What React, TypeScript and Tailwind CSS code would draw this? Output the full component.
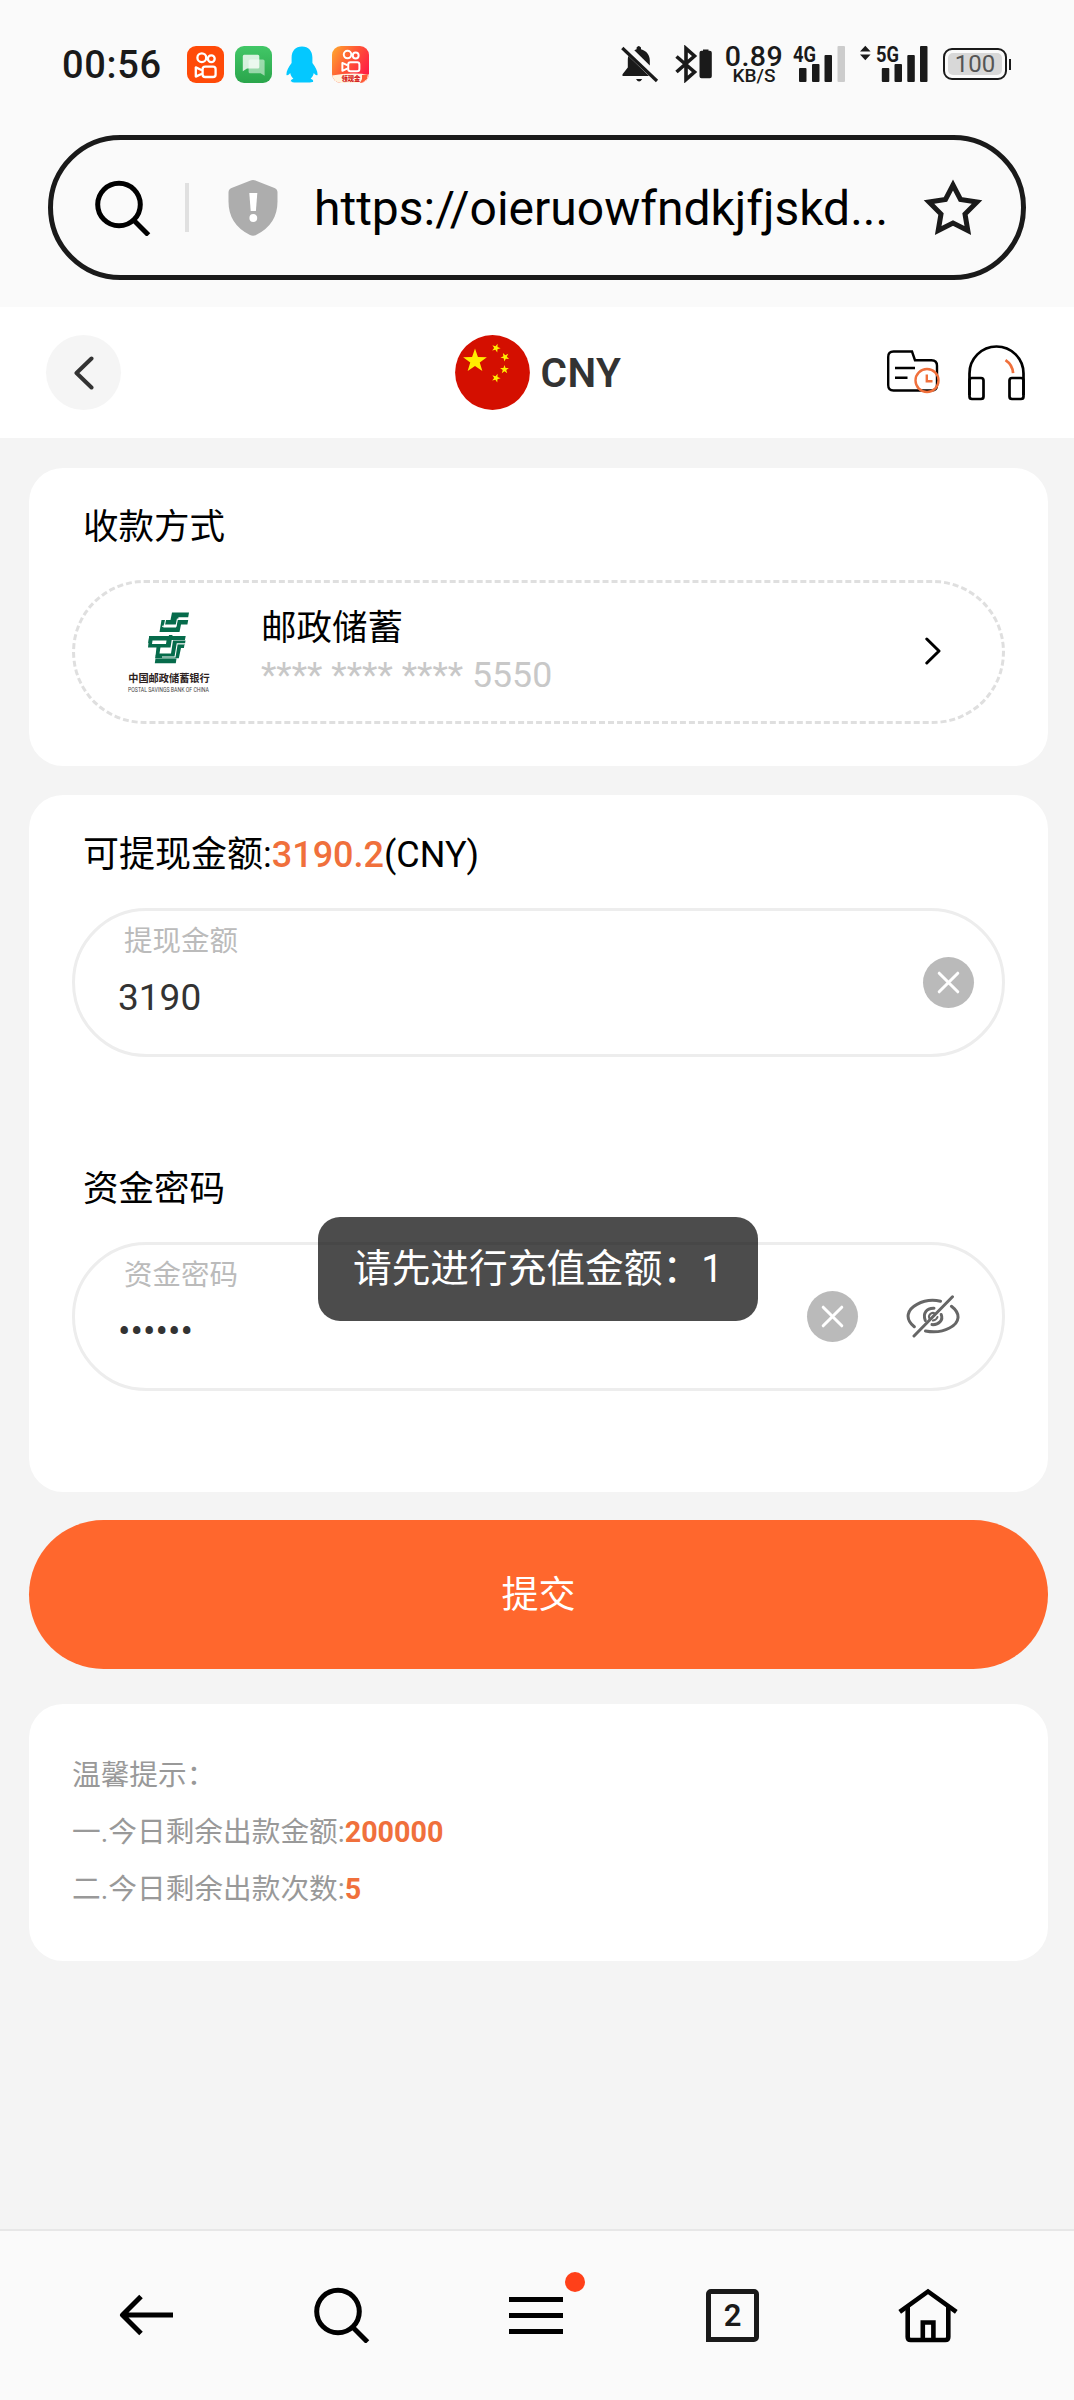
import React from 'react';

interface FieldProps {
  label: string;
  value: string;
  children: React.ReactNode;
}

const KwaiGlyph: React.FC = () => (
  <g fill="none" stroke="#fff" strokeWidth="2.3" strokeLinejoin="round">
    <circle cx="14.8" cy="11.7" r="4.4" />
    <circle cx="24.3" cy="12.8" r="3.4" />
    <rect x="15.6" y="20.6" width="13" height="10.4" rx="2.6" />
    <path d="M15 24.2 8.8 21.4v9.2l6.2-2.8" />
  </g>
);

const AppIcons: React.FC = () => (
  <>
    <svg className="ml-[24px] h-[37px] w-[37px]" viewBox="0 0 37 37">
      <rect width="37" height="37" rx="9" fill="#ff4a08" />
      <KwaiGlyph />
    </svg>
    <svg className="ml-[11px] h-[37px] w-[37px]" viewBox="0 0 37 37">
      <defs>
        <linearGradient id="chat" x1="0" y1="0" x2="0" y2="1">
          <stop offset="0" stopColor="#42c767" />
          <stop offset="1" stopColor="#2aa54b" />
        </linearGradient>
      </defs>
      <rect width="37" height="37" rx="9" fill="url(#chat)" />
      <path d="M15 13.5h13q1.6 0 1.6 1.6v14.6l-4-2.4H15q-1.4 0-1.4-1.5V15q0-1.5 1.4-1.5z" fill="#fff" opacity=".5" />
      <path d="M9.2 8.7h13.6q1.5 0 1.5 1.5v11q0 1.4-1.5 1.4H12l-4.2 2.6V10.2q0-1.5 1.4-1.5z" fill="#fff" opacity=".8" />
    </svg>
    <svg className="ml-[14px] h-[37px] w-[32px]" viewBox="0 0 32 37">
      <path
        d="M16 .4C9.500.4 5.600 5 5.600 11.500v5.500C2.500 21 .4 25 .4 28.500c.3 1.500 2 1 3.800-1.400.5 2.400 1.600 4.200 3.200 5.700-1.800.6-2.600 1.400-2.600 2.400 0 1 1.500 1.300 11.200 1.300s11.200-.3 11.200-1.300c0-1-.8-1.800-2.600-2.400 1.600-1.500 2.700-3.300 3.200-5.700 1.800 2.400 3.500 2.900 3.800 1.400 0-3.500-2.100-7.500-5.200-11.500v-5.500C26.400 5 22.500.4 16 .4z"
        fill="#04c8ff"
      />
    </svg>
    <svg className="ml-[14px] h-[37px] w-[37px]" viewBox="0 0 37 37">
      <defs>
        <linearGradient id="lite" x1="0" y1="0" x2="1" y2=".6">
          <stop offset="0" stopColor="#ffab2e" />
          <stop offset=".5" stopColor="#ff5a35" />
          <stop offset="1" stopColor="#ff1f45" />
        </linearGradient>
        <clipPath id="liteClip">
          <rect width="37" height="37" rx="9" />
        </clipPath>
      </defs>
      <g clipPath="url(#liteClip)">
        <rect width="37" height="37" fill="url(#lite)" />
        <path d="M0 29.500q18-3.500 37-1V37H0z" fill="#fff3e0" />
        <path d="M30 29l6-1-1 5-5 4h-2l2-4z" fill="#ff5a35" />
        <g transform="translate(2.8 -1.500) scale(.86)">
          <KwaiGlyph />
        </g>
      </g>
      <text x="9.500" y="34.800" fontSize="6.300" fontWeight="900" fill="#d51a1a">
        领现金
      </text>
    </svg>
  </>
);

const StatusBar: React.FC = () => (
  <div className="flex h-[128px] items-center pl-[62px] text-[#1a1a1a]">
    <span className="mt-[2px] w-[101px] text-[38px] leading-none font-medium tracking-[0.7px] whitespace-nowrap">00:56</span>
    <AppIcons />
    <svg className="ml-[252px] h-[38px] w-[38px]" viewBox="0 0 38 38" fill="#1a1a1a">
      <path d="M15.600 2.600q2-3.200 4.400 0v1.600c5.600 1.600 8.800 6 8.800 11.200v5.200L13.300 5.300q1-.7 2.300-1.100z" />
      <path d="M7.300 11 28 31H1.500v-1.700l5.300-6.800v-8q0-1.900.5-3.500z" />
      <path d="M15 34h6.200q-3.100 5-6.200 0z" />
      <path d="M1.300 3 36 36" stroke="#1a1a1a" strokeWidth="3.200" />
    </svg>
    <svg className="ml-[16px] h-[38px] w-[37px]" viewBox="0 0 37 38">
      <path d="M1.500 11.500 19.500 27 11 34.500v-31L19.500 11 1.500 27" fill="none" stroke="#1a1a1a" strokeWidth="3.600" />
      <path d="M28 4.500h5.500v1.200h1.300q2 0 2 2v23.500q0 2-2 2h-8.300q-2 0-2-2V7.700q0-2 2-2H28z" fill="#1a1a1a" />
    </svg>
    <div className="ml-[13px] flex w-[58px] flex-col items-center">
      <span className="text-[28.500px] leading-[23px] font-medium tracking-[0.5px]">0.89</span>
      <span className="text-[19px] leading-[16px] font-medium">KB/S</span>
    </div>
    <svg className="ml-[10px] h-[38px] w-[53px] overflow-visible" viewBox="0 0 53 38" fill="#1a1a1a">
      <text x="0" y="16.500" fontSize="22" fontWeight="700" textLength="23" lengthAdjust="spacingAndGlyphs">
        4G
      </text>
      <rect x="6" y="23" width="7.500" height="14" rx="1" />
      <rect x="19" y="19" width="7.500" height="18" rx="1" />
      <rect x="31.500" y="10" width="7.500" height="27" rx="1" />
      <rect x="44.500" y="1" width="7.500" height="36" rx="1" fill="#ccc" />
    </svg>
    <svg className="ml-[14px] h-[38px] w-[69px] overflow-visible" viewBox="0 0 69 38" fill="#1a1a1a">
      <path d="M0 6.500 5.300.8l5.300 5.700zM0 9.500h10.600L5.300 15.200z" />
      <text x="16" y="16.500" fontSize="22" fontWeight="700" textLength="23" lengthAdjust="spacingAndGlyphs">
        5G
      </text>
      <rect x="21.800" y="23" width="7.500" height="14" rx="1" />
      <rect x="34.500" y="19" width="7.500" height="18" rx="1" />
      <rect x="47.300" y="10" width="7.500" height="27" rx="1" />
      <rect x="60" y="1" width="7.500" height="36" rx="1" />
    </svg>
    <div className="ml-[14px] flex h-[32px] w-[64px] items-center justify-center rounded-[9px] border-2 border-[#1a1a1a] p-[3px]">
      <span className="h-full w-full rounded-[5px] bg-[#d8d8d8] text-center text-[24px] leading-[23px] text-[#555]">
        100
      </span>
    </div>
    <span className="ml-[2px] h-[11px] w-[2px] bg-[#1a1a1a]" />
  </div>
);

const SearchIcon: React.FC = () => (
  <svg className="h-[56px] w-[56px] shrink-0" viewBox="0 0 56 56" fill="none" stroke="#000" strokeWidth="5">
    <circle cx="24" cy="24.500" r="21.300" />
    <path d="M38.500 40 53.500 55" />
  </svg>
);

const AddressBar: React.FC = () => (
  <div className="mx-[48px] mt-[7px] flex h-[145px] items-center rounded-full border-[5px] border-[#1a1a1a] pr-[38px] pl-[42px]">
    <SearchIcon />
    <span className="ml-[34px] h-[49px] w-[4px] bg-[#e0e0e0]" />
    <svg className="ml-[39px] h-[56px] w-[50px] shrink-0" viewBox="0 0 50 56">
      <path
        d="M25 0q1.500 0 3 .8L46.500 8q3 1.300 3 4.500v9q0 23-21.500 33.500-3 1.500-6 0Q.5 44.500.5 21.500v-9Q.5 9.300 3.500 8L22 .8Q23.500 0 25 0z"
        fill="#adadad"
      />
      <path d="M21.300 13h8l-1.400 18h-5.200z" fill="#fff" />
      <circle cx="25.300" cy="38" r="3.900" fill="#fff" />
    </svg>
    <span className="mt-[3px] ml-[36px] flex-1 text-[48px] leading-[60px] whitespace-nowrap text-black">
      https://oieruowfndkjfjskd...
    </span>
    <svg className="h-[60px] w-[60px] shrink-0" viewBox="0 0 60 60" fill="none" stroke="#1a1a1a" strokeWidth="5">
      <path d="M30 7 37.500 21.500 54 24 42 36 44.800 52.500 30 45 15.200 52.500 18 36 6 24 22.500 21.500z" />
    </svg>
  </div>
);

const STAR = 'M0-10 2.350-3.240 9.510-3.090 3.800 1.240 5.880 8.090 0 4-5.880 8.090-3.800 1.240-9.510-3.090-2.350-3.240z';

const Header: React.FC = () => (
  <header className="mt-[27px] flex h-[131px] items-center bg-white pr-[49px] pl-[46px]">
    <button className="flex h-[75px] w-[75px] items-center justify-center rounded-full bg-[#f5f5f5]">
      <svg className="h-[34px] w-[20px]" viewBox="0 0 20 34" fill="none" stroke="#333" strokeWidth="4" strokeLinecap="round" strokeLinejoin="round">
        <path d="M17.500 2.500 2.500 17l15 14.500" />
      </svg>
    </button>
    <svg className="ml-[333.500px] h-[75px] w-[75px]" viewBox="0 0 75 75" fill="#ffee00">
      <circle cx="37.500" cy="37.500" r="37.400" fill="#d40f00" />
      <path d={STAR} transform="translate(20 26) scale(1.250)" />
      <path d={STAR} transform="translate(41 13) rotate(20) scale(.46)" />
      <path d={STAR} transform="translate(50 22) rotate(45) scale(.46)" />
      <path d={STAR} transform="translate(49.500 34.500) scale(.46)" />
      <path d={STAR} transform="translate(41 43) rotate(20) scale(.46)" />
    </svg>
    <h1 className="ml-[11px] flex-1 text-[40.500px] leading-[48px] font-semibold tracking-[0.4px] text-[#333]">CNY</h1>
    <svg className="mb-[2px] h-[44px] w-[53px]" viewBox="0 0 53 44" fill="none" strokeWidth="2.400">
      <path d="M6.500 1.500H25l3 8.700h16.500q5.500 0 5.500 5.500V35q0 5.500-5.500 5.500h-38q-5.300 0-5.300-5.500V7q0-5.500 5.300-5.500z" stroke="#000" />
      <path d="M8 18h20M8 27.800h12.500" stroke="#000" />
      <g stroke="#f0703c">
        <circle cx="40" cy="30.500" r="11.500" />
        <path d="M39.800 24.500v6.800h5.700" />
      </g>
    </svg>
    <svg className="ml-[28px] h-[56px] w-[57px]" viewBox="0 0 57 56" fill="none" strokeWidth="2.700">
      <path d="M1.500 50V28.500a27 27 0 0 1 54 0V50" stroke="#000" />
      <rect x="1.500" y="33" width="14" height="21" rx="2.500" stroke="#000" />
      <rect x="41.500" y="33" width="14" height="21" rx="2.500" stroke="#000" />
      <path d="M37.500 15.200q7 4.600 7.600 13" stroke="#f0703c" />
    </svg>
  </header>
);

const BankLogo: React.FC = () => (
  <div className="flex w-[82px] shrink-0 flex-col items-center">
    <svg className="h-[52px] w-[42px]" viewBox="0 0 42 52" fill="#066b4b">
      <path d="M24 .5h17l-.8 4.800H30.500L29 12.500H13.500L15 8h7.500z" />
      <path d="M29.500 8h10.700l-.8 4.500H33L31.500 20H11.500l2-12h3l-1.200 7.500H28z" />
      <path d="M1.200 24h36.500l-.8 4H20l-.7 3H.2z" />
      <path d="M0 35.500 1.200 24h4.500l-.7 4h15l1-5h3.500l-2 12.500z" />
      <path d="M4.500 28.500h14l-.5 3.500H4z" fill="#fff" />
      <path d="M8.500 35h4l-1 6.500h11.500l2-13h12.500l-.6 4H29.500l-2 12H7.500z" />
      <path d="M29.500 32.500h7l-.6 3.500H33l-2.200 10.200H7l1-4h16.500l1.500-9.700z" />
      <path d="M7.500 46.500h21l-.7 4.700H6.800z" />
      <path d="M17.500 8 16.500 13M14 14.200h14l1.500-7.500M14 45H27l2.200-13.300h8" fill="none" stroke="#fff" strokeWidth="1.100" />
    </svg>
    <span className="mt-[8px] text-[10.200px] leading-[14px] font-bold whitespace-nowrap text-[#2b2120]">中国邮政储蓄银行</span>
    <svg className="h-[7px] w-[82px] overflow-visible" viewBox="0 0 82 7">
      <text x="0" y="5.800" fontSize="6.300" fill="#444" textLength="81" lengthAdjust="spacingAndGlyphs">
        POSTAL SAVINGS BANK OF CHINA
      </text>
    </svg>
  </div>
);

const ClearButton: React.FC = () => (
  <button className="h-[51px] w-[51px] rounded-full bg-[#bababa]">
    <svg viewBox="0 0 51 51" fill="none" stroke="#fff" strokeWidth="3" strokeLinecap="round">
      <path d="M16.200 16.200l18.600 18.600M34.800 16.200 16.200 34.800" />
    </svg>
  </button>
);

const HiddenEyeIcon: React.FC = () => (
  <svg className="ml-[48px] h-[43px] w-[54px]" viewBox="0 0 54 43" fill="none" stroke="#666" strokeWidth="3" strokeLinecap="round">
    <path d="M8.300 31.700C-1.500 24 1 14.500 11 9.300 18 5.500 27 4.500 34.500 6.200" />
    <path d="M45.400 11.300C55 18.500 54 28 43.500 33 36.500 36.800 27.500 37.500 19.500 36" />
    <path d="M19.300 25.500C16.500 18.500 20.500 13 28 13.300" />
    <path d="M35.200 19.500C37.500 25 33 30 26 29.600" />
    <path d="M24 24.500C21 20.500 25.500 16.500 29 18.500M31.500 22Q30.500 25 27 25.500" strokeWidth="2" />
    <path d="M46.500 1.800 8 41" />
  </svg>
);

const Field: React.FC<FieldProps> = ({ label, value, children }) => (
  <div className="mt-[29px] flex h-[149px] items-center rounded-full border-[3px] border-[#ededed] pl-[43px]">
    <div className="flex-1 self-start pt-[11px]">
      <p className="ml-[6px] text-[28.500px] leading-[40px] text-[#bbb]">{label}</p>
      <p className="mt-[11px] text-[37px] leading-[50px] text-[#333]">{value}</p>
    </div>
    {children}
  </div>
);

const BottomNav: React.FC = () => (
  <nav className="grid h-[171px] grid-cols-5 items-center border-t-2 border-[#e7e7e7] bg-[#fafafa] px-[48px] pb-[1px]">
    <div className="flex justify-center">
      <svg className="h-[42px] w-[54px]" viewBox="0 0 54 42" fill="none" stroke="#000" strokeWidth="5">
        <path d="M3 21h51M22 2.500 3.500 21 22 39.500" strokeLinejoin="round" />
      </svg>
    </div>
    <div className="flex justify-center pl-[2px]">
      <SearchIcon />
    </div>
    <div className="flex justify-center pr-[1px]">
      <div className="relative flex w-[54px] flex-col gap-[11px]">
        <span className="h-[5px] bg-black" />
        <span className="h-[5px] bg-black" />
        <span className="h-[5px] bg-black" />
        <span className="absolute -top-[25px] -right-[22px] h-[20px] w-[20px] rounded-full bg-[#ff4019]" />
      </div>
    </div>
    <div className="flex justify-center">
      <span className="flex h-[53px] w-[53px] items-center justify-center rounded-[5px] rounded-bl-none border-[5px] border-[#1a1a1a] text-[31px] leading-none font-semibold text-[#1a1a1a]">
        2
      </span>
    </div>
    <div className="flex justify-center">
      <svg className="h-[55px] w-[60px]" viewBox="0 0 60 55" fill="none" stroke="#000" strokeWidth="4.600">
        <path d="M1.700 23.800 30 3.500 58.300 23.800" />
        <path d="M9.700 18v31q0 3 3 3h34.600q3 0 3-3V18M24.800 52V34.500h10.600V52" />
      </svg>
    </div>
  </nav>
);

const App: React.FC = () => {
  return (
    <div className="relative flex h-[2400px] w-[1074px] flex-col bg-[#f4f4f4] font-[Roboto,'Noto_Sans_CJK_SC',sans-serif]">
      <div className="bg-[#fafafa]">
        <StatusBar />
        <AddressBar />
        <Header />
      </div>

      <main className="flex-1 pt-[30px] pr-[26px] pl-[29px]">
        <section className="h-[298px] rounded-[34px] bg-white px-[43px] pt-[35px]">
          <h2 className="ml-[11px] text-[35.500px] leading-[48px] text-black">收款方式</h2>
          <div className="mt-[29px] flex h-[144px] items-center rounded-full border-[3px] border-dashed border-[#dfdfdf] pr-[61px] pl-[53px]">
            <BankLogo />
            <div className="ml-[51px] flex-1 pb-[1px]">
              <p className="text-[35.500px] leading-[46px] text-black">邮政储蓄</p>
              <p className="text-[35.700px] leading-[48px] text-[#c8c8c8]">**** **** **** 5550</p>
            </div>
            <svg className="mb-[2px] h-[28px] w-[16px]" viewBox="0 0 16 28" fill="none" stroke="#000" strokeWidth="3" strokeLinecap="round" strokeLinejoin="round">
              <path d="M1.800 2 14 14 1.800 26" />
            </svg>
          </div>
        </section>

        <section className="mt-[29px] h-[697px] rounded-[34px] bg-white px-[43px] pt-[36px]">
          <h2 className="ml-[11px] text-[36px] leading-[48px] text-black">
            可提现金额:<span className="font-medium text-[#f0703c]">3190.2</span>(CNY)
          </h2>
          <Field label="提现金额" value="3190">
            <div className="mr-[28px] flex items-center">
              <ClearButton />
            </div>
          </Field>

          <h2 className="mt-[108px] ml-[11px] text-[35.500px] leading-[48px] text-black">资金密码</h2>
          <Field label="资金密码" value="••••••">
            <div className="mr-[42px] flex items-center">
              <ClearButton />
              <HiddenEyeIcon />
            </div>
          </Field>
        </section>

        <button className="mt-[28px] h-[149px] w-full rounded-full bg-[#ff672d] pt-[2px] text-[37px] text-white">提交</button>

        <section className="mt-[35px] h-[257px] rounded-[34px] bg-white px-[43px] pt-[43px] text-[28.700px] leading-[57px] text-[#999]">
          <p>温馨提示：</p>
          <p>
            一.今日剩余出款金额:<b className="text-[#f0703c]">200000</b>
          </p>
          <p>
            二.今日剩余出款次数:<b className="text-[#f0703c]">5</b>
          </p>
        </section>
      </main>

      <BottomNav />

      <div className="absolute top-[1217px] left-[318px] flex h-[104px] w-[440px] items-center rounded-[22px] bg-black/70 pl-[35px] text-[38.700px] whitespace-nowrap text-white">
        请先进行充值金额：1
      </div>
    </div>
  );
};

export default App;
